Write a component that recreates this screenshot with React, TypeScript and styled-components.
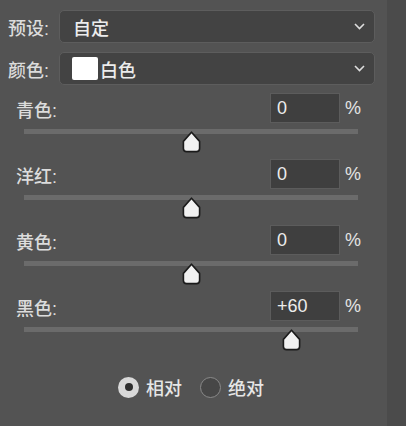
import styled, { createGlobalStyle } from "styled-components";

const GlobalStyle = createGlobalStyle`
  html, body {
    margin: 0;
    padding: 0;
    background: #535353;
  }
  body {
    font-family: "Liberation Sans", "Noto Sans CJK SC", sans-serif;
  }
`;

const TRACK_WIDTH = 334;

const channels = [
  { name: "青色:", value: 0 },
  { name: "洋红:", value: 0 },
  { name: "黄色:", value: 0 },
  { name: "黑色:", value: 60 },
];

function Chevron() {
  return (
    <svg width="11" height="7" viewBox="0 0 11 7">
      <path d="M1 1 L5.5 5.5 L10 1" fill="none" stroke="#dedede" strokeWidth="1.6" />
    </svg>
  );
}

function ThumbIcon() {
  return (
    <svg width="19" height="22" viewBox="0 0 19 22">
      <path
        d="M9.5 1.2 L17.6 10.4 V17.4 Q17.6 20.6 14.4 20.6 H4.6 Q1.4 20.6 1.4 17.4 V10.4 Z"
        fill="#f1f1f1"
        stroke="#1b1b1b"
        strokeWidth="1.6"
        strokeLinejoin="round"
      />
    </svg>
  );
}

export default function App() {
  return (
    <>
      <GlobalStyle />
      <Page>
        <Panel>
          <SelectRow>
            <FieldLabel>预设:</FieldLabel>
            <Select>
              <SelectText>自定</SelectText>
              <Chevron />
            </Select>
          </SelectRow>
          <SelectRow>
            <FieldLabel>颜色:</FieldLabel>
            <Select compact>
              <Swatch />
              <SelectText>白色</SelectText>
              <Chevron />
            </Select>
          </SelectRow>

          <Channels>
            {channels.map((c) => {
              const pct = (c.value + 100) / 200;
              return (
                <Channel key={c.name}>
                  <ChannelHeader>
                    <ChannelLabel>{c.name}</ChannelLabel>
                    <ValueBox>{c.value > 0 ? `+${c.value}` : c.value}</ValueBox>
                    <Percent>%</Percent>
                  </ChannelHeader>
                  <Track>
                    <Thumb style={{ left: pct * TRACK_WIDTH - 9.5 }}>
                      <ThumbIcon />
                    </Thumb>
                  </Track>
                </Channel>
              );
            })}
          </Channels>

          <RadioRow>
            <RadioOption>
              <RadioCircle checked />
              相对
            </RadioOption>
            <RadioOption>
              <RadioCircle />
              绝对
            </RadioOption>
          </RadioRow>
        </Panel>
        <SideStrip />
      </Page>
    </>
  );
}

const Page = styled.div`
  display: flex;
  width: 406px;
  height: 426px;
  background: #535353;
  overflow: hidden;
`;

const Panel = styled.div`
  flex: 1;
  display: flex;
  flex-direction: column;
  padding: 10px 12px 0 8px;
`;

const SideStrip = styled.div`
  width: 19px;
  background: #4b4b4b;
`;

const SelectRow = styled.div`
  display: flex;
  align-items: center;
  margin-bottom: 9px;
`;

const FieldLabel = styled.div`
  width: 51px;
  color: #dcdcdc;
  font-size: 18px;
  font-weight: 500;
`;

const Select = styled.div<{ compact?: boolean }>`
  flex: 1;
  box-sizing: border-box;
  height: 33px;
  display: flex;
  align-items: center;
  padding: 0 9px 0 ${({ compact }) => (compact ? "12px" : "13px")};
  background: #434343;
  border: 1.5px solid #5d5d5d;
  border-radius: 5px;
`;

const SelectText = styled.span`
  flex: 1;
  color: #ececec;
  font-size: 18px;
  font-weight: 500;
`;

const Swatch = styled.span`
  width: 26px;
  height: 23px;
  background: #ffffff;
  border-radius: 2px;
  margin-right: 2px;
`;

const Channels = styled.div`
  display: flex;
  flex-direction: column;
  margin-top: -1px;
`;

const Channel = styled.div`
  display: flex;
  flex-direction: column;
  margin-bottom: 25px;
`;

const ChannelHeader = styled.div`
  display: grid;
  grid-template-columns: 1fr 70px 35px;
  align-items: center;
  padding-left: 8px;
`;

const ChannelLabel = styled.div`
  color: #dcdcdc;
  font-size: 18px;
  font-weight: 500;
  padding-top: 2px;
`;

const ValueBox = styled.div`
  box-sizing: border-box;
  height: 30px;
  display: flex;
  align-items: center;
  padding-left: 6px;
  background: #3f3f3f;
  border: 1.5px solid #5c5c5c;
  color: #ececec;
  font-size: 18px;
`;

const Percent = styled.div`
  padding-left: 5px;
  color: #e4e4e4;
  font-size: 18px;
`;

const Track = styled.div`
  position: relative;
  height: 5px;
  margin: 6px 17px 0 16px;
  background: #6b6b6b;
`;

const Thumb = styled.div`
  position: absolute;
  top: 2px;
  line-height: 0;
`;

const RadioRow = styled.div`
  display: flex;
  justify-content: center;
  gap: 18px;
  margin: 17px 17px 0 16px;
`;

const RadioOption = styled.label`
  display: flex;
  align-items: center;
  gap: 7px;
  color: #e6e6e6;
  font-size: 18px;
  font-weight: 500;
`;

const RadioCircle = styled.span<{ checked?: boolean }>`
  box-sizing: border-box;
  width: 21px;
  height: 21px;
  border-radius: 50%;
  display: flex;
  align-items: center;
  justify-content: center;
  background: ${({ checked }) => (checked ? "#d9d9d9" : "#474747")};
  border: ${({ checked }) => (checked ? "none" : "1.5px solid #8a8a8a")};
  &::after {
    content: "";
    width: 8px;
    height: 8px;
    border-radius: 50%;
    background: #2f2f2f;
    display: ${({ checked }) => (checked ? "block" : "none")};
  }
`;
